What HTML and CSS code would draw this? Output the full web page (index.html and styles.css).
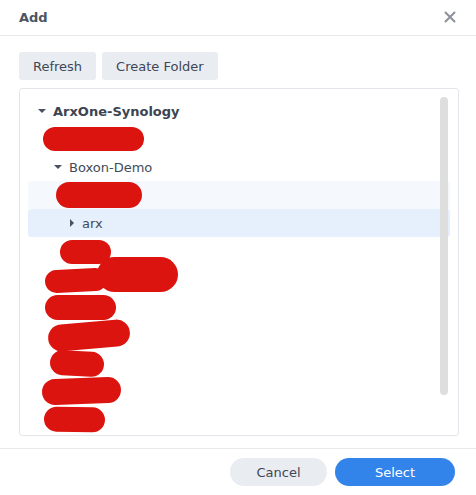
FILE: index.html
```html
<!DOCTYPE html>
<html>
<head>
<meta charset="utf-8">
<link rel="stylesheet" href="styles.css">
</head>
<body>
<div class="dialog">
  <div class="header">
    <span class="title">Add</span>
    <svg class="close" width="12" height="12" viewBox="0 0 12 12"><path d="M1.5 1.5 L10.5 10.5 M10.5 1.5 L1.5 10.5" stroke="#8b9099" stroke-width="2" stroke-linecap="round"/></svg>
  </div>
  <div class="body">
    <div class="toolbar">
      <button class="btn">Refresh</button>
      <button class="btn">Create Folder</button>
    </div>
    <div class="panel">
      <div class="tree">
        <div class="row lvl0"><span class="caret down"></span><span class="label bold">ArxOne-Synology</span></div>
        <div class="row lvl0"><span class="blob b1"></span></div>
        <div class="row lvl1"><span class="caret down"></span><span class="label">Boxon-Demo</span></div>
        <div class="row lvl1 hover"><span class="blob b2"></span></div>
        <div class="row lvl2 selected"><span class="caret right"></span><span class="label">arx</span></div>
        <div class="row"><span class="blob b3"></span></div>
        <div class="row"><span class="blob b4"></span><span class="blob b4x"></span></div>
        <div class="row"><span class="blob b5"></span></div>
        <div class="row"><span class="blob b6"></span></div>
        <div class="row"><span class="blob b7"></span></div>
        <div class="row"><span class="blob b8"></span></div>
        <div class="row"><span class="blob b9"></span></div>
      </div>
      <div class="scrollbar"></div>
    </div>
  </div>
  <div class="footer">
    <button class="pill cancel">Cancel</button>
    <button class="pill select">Select</button>
  </div>
</div>
</body>
</html>
```
FILE: styles.css
```css
* { box-sizing: border-box; }
html, body { margin: 0; padding: 0; background: #fff; }
body { font-family: "DejaVu Sans", Verdana, sans-serif; font-size: 13px; color: #414b58; }
.dialog { width: 476px; height: 495px; display: flex; flex-direction: column; }
.header { height: 36px; border-bottom: 1px solid #e6e8ec; display: flex; align-items: center; justify-content: space-between; padding: 0 20px 1px 19px; }
.title { font-weight: bold; font-size: 13px; color: #4c5464; }
.close { display: block; }
.body { padding: 16px 17px 12px 19px; }
.toolbar { display: flex; gap: 6px; height: 28px; margin-bottom: 8px; }
.btn { font: inherit; font-size: 13px; color: #3f4656; background: #e9edf2; border: none; border-radius: 3px; height: 28px; padding: 0 14px; }
.panel { position: relative; height: 348px; border: 1px solid #e3e6ea; border-radius: 3px; overflow: hidden; padding: 8px 8px 0 8px; }
.tree { display: flex; flex-direction: column; }
.row { position: relative; height: 28px; display: flex; align-items: center; border-radius: 3px; padding-left: 10px; }
.row.lvl1 { padding-left: 26px; }
.row.lvl2 { padding-left: 42px; }
.row.hover { background: #f5f9fe; }
.row.selected { background: #e6f0fc; }
.caret { width: 0; height: 0; margin-right: 8px; }
.caret.down { border-left: 4px solid transparent; border-right: 4px solid transparent; border-top: 4.5px solid #4a5262; margin-right: 7px; }
.caret.right { border-top: 4px solid transparent; border-bottom: 4px solid transparent; border-left: 4.5px solid #4a5262; margin-right: 8px; }
.label { color: #414b58; }
.label.bold { font-weight: bold; color: #3c4452; }
.blob { display: block; background: #dc140f; border-radius: 14px; }
.b1 { width: 101px; height: 24px; margin-left: 5px; }
.b2 { width: 86px; height: 26px; margin-left: 2px; }
.b3 { width: 51px; height: 24px; margin-left: 22px; margin-top: 2px; }
.b4 { width: 62px; height: 23px; margin-left: 7px; margin-top: 2px; transform: rotate(-3deg); }
.b4x { position: absolute; left: 69px; top: -8px; width: 81px; height: 35px; background: #dc140f; border-radius: 18px; }
.b5 { width: 71px; height: 25px; margin-left: 7px; }
.b6 { width: 82px; height: 27px; margin-left: 10px; transform: rotate(-5deg); }
.b7 { width: 54px; height: 25px; margin-left: 12px; transform: rotate(3deg); }
.b8 { width: 79px; height: 26px; margin-left: 4px; transform: rotate(-2deg); }
.b9 { width: 61px; height: 25px; margin-left: 6px; transform: rotate(1deg); }
.scrollbar { position: absolute; top: 8px; right: 10px; width: 8px; height: 298px; background: #dedede; border-radius: 4px; }
.footer { border-top: 1px solid #e6e8ec; display: flex; justify-content: flex-end; gap: 8px; padding: 9px 21px 0 0; }
.pill { font: inherit; font-size: 13px; height: 28px; border: none; border-radius: 14px; }
.cancel { width: 97px; background: #e9edf2; color: #3f4656; }
.select { width: 120px; background: #3384ea; color: #fff; }
```
